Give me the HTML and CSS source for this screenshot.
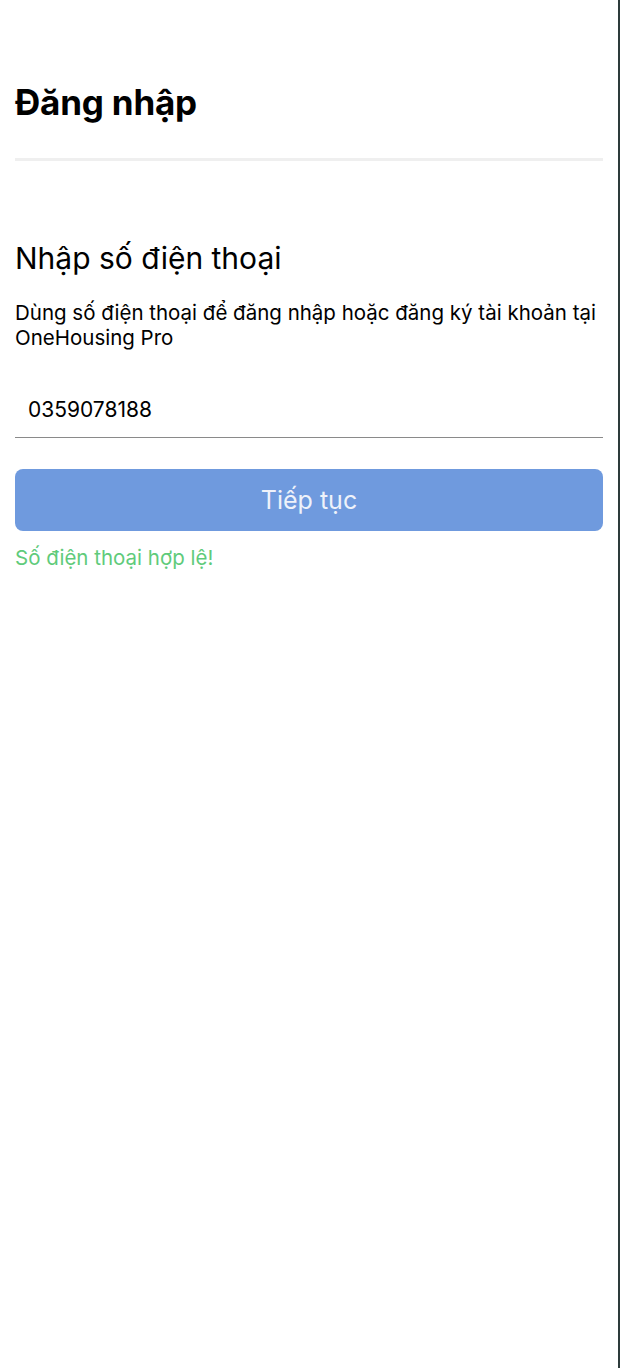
FILE: index.html
```html
<!DOCTYPE html>
<html lang="vi">
<head>
<meta charset="utf-8">
<title>Đăng nhập</title>
<link rel="stylesheet" href="styles.css">
</head>
<body>
<div class="screen">
  <header class="topbar">
    <h1 class="title">Đăng nhập</h1>
  </header>
  <main class="content">
    <h2 class="heading">Nhập số điện thoại</h2>
    <p class="desc">Dùng số điện thoại để đăng nhập hoặc đăng ký tài khoản tại OneHousing Pro</p>
    <div class="field">0359078188</div>
    <button class="btn" type="button">Tiếp tục</button>
    <p class="valid">Số điện thoại hợp lệ!</p>
  </main>
</div>
</body>
</html>
```

FILE: styles.css
```css
html, body {
  margin: 0;
  padding: 0;
  background: #fff;
}
body {
  font-family: Inter, "Noto Sans", "Liberation Sans", sans-serif;
  color: #000;
}
.screen {
  box-sizing: border-box;
  width: 620px;
  min-height: 1368px;
  border-right: 2px solid #2d3b3b;
  padding: 0 15px;
}
.topbar {
  padding-top: 82px;
  border-bottom: 3px solid #efefef;
  padding-bottom: 36px;
}
.title {
  margin: 0;
  font-size: 35px;
  font-weight: 700;
  line-height: 40px;
  letter-spacing: -0.2px;
}
.content {
  padding-top: 78px;
}
.heading {
  margin: 0;
  font-size: 30px;
  font-weight: 400;
  line-height: 38px;
}
.desc {
  margin: 23px 0 0;
  font-size: 20.5px;
  line-height: 25px;
}
.field {
  margin-top: 33px;
  padding: 0 13px;
  height: 54px;
  line-height: 54px;
  font-size: 21px;
  border-bottom: 1px solid #8a8a8a;
}
.btn {
  display: block;
  width: 100%;
  margin-top: 31px;
  height: 62px;
  border: none;
  border-radius: 8px;
  background: #6f9ade;
  color: #eef2fa;
  font-family: inherit;
  font-size: 25px;
}
.valid {
  margin: 14px 0 0;
  color: #5fcb7b;
  font-size: 20.5px;
  line-height: 26px;
}
```
